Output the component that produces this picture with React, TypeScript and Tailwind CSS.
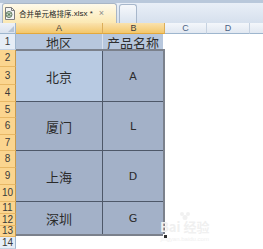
const cjk = "font-['Noto_Sans_CJK_SC','Noto_Sans',sans-serif]";

const rowHeads = [
  { n: '1', h: 'h-[16px]', sel: false },
  { n: '2', h: 'h-[17px]', sel: true },
  { n: '3', h: 'h-[18px]', sel: true },
  { n: '4', h: 'h-[17px]', sel: true },
  { n: '5', h: 'h-[16px]', sel: true },
  { n: '6', h: 'h-[17px]', sel: true },
  { n: '7', h: 'h-[16px]', sel: true },
  { n: '8', h: 'h-[17px]', sel: true },
  { n: '9', h: 'h-[17px]', sel: true },
  { n: '10', h: 'h-[17px]', sel: true },
  { n: '11', h: 'h-[12px]', sel: true },
  { n: '12', h: 'h-[12px]', sel: true },
  { n: '13', h: 'h-[11px]', sel: true },
  { n: '14', h: 'h-[12px]', sel: false },
];

const merged = [
  { a: '北京', b: 'A', h: 'h-[50px]', active: true },
  { a: '厦门', b: 'L', h: 'h-[49px]', active: false },
  { a: '上海', b: 'D', h: 'h-[51px]', active: false },
  { a: '深圳', b: 'G', h: 'h-[33px]', active: false },
];

function ExcelIcon() {
  return (
    <svg width="12" height="13" viewBox="0 0 12 13">
      <path d="M1.5 0.5h6l3 3v9h-9z" fill="#f4f4f4" stroke="#7d7d7d" />
      <path d="M7.5 0.5v3h3" fill="none" stroke="#7d7d7d" />
      <circle cx="5" cy="7.5" r="3" fill="#cfd8cf" stroke="#5d7a5d" />
      <path d="M3.6 6.1l2.8 2.8M6.4 6.1l-2.8 2.8" stroke="#3c6a3c" strokeWidth="1" />
    </svg>
  );
}

function TabBar() {
  return (
    <div className="relative h-[23px] bg-gradient-to-b from-[#e9eff7] to-[#d6e0ed] border-t-[3px] border-[#b9c8db] flex items-end pl-[2px] gap-[2px]">
      <div className="h-[20px] w-[115px] overflow-hidden rounded-t-[3px] border border-b-0 border-[#a9b6c6] bg-gradient-to-b from-[#fffaea] to-[#fbe8b2] flex items-center pl-[1px]">
        <ExcelIcon />
        <span className={`ml-[3px] text-[7.5px] leading-none text-[#1e1e1e] ${cjk}`}>合并单元格排序</span>
        <span className="text-[8px] leading-none text-[#1e1e1e] font-['Liberation_Sans',sans-serif]">.xlsx *</span>
        <span className="ml-[6px] text-[9px] leading-none text-[#8b8b8b] font-['Liberation_Sans',sans-serif]">×</span>
      </div>
      <div className="h-[19px] w-[18px] rounded-t-[3px] border border-b-0 border-[#a7b7cb] bg-gradient-to-b from-[#f6f8fb] to-[#dbe4ef]" />
    </div>
  );
}

function ColHead({ label, w, sel, last }: { label: string; w: string; sel?: boolean; last?: boolean }) {
  return (
    <div
      className={`${w} ${last ? '' : 'border-r'} h-full flex items-center justify-center text-[9px] leading-none font-['Liberation_Sans',sans-serif] ${
        sel
          ? 'bg-gradient-to-b from-[#fae2ad] to-[#f3c76a] border-[#dcae5a] text-[#3b3b3b] border-b border-b-[#e3a83c]'
          : 'bg-gradient-to-b from-[#f4f7fb] to-[#e1e8f1] border-[#c6d2e1] text-[#4c6384] border-b border-b-[#9eb6ce]'
      }`}
    >
      {label}
    </div>
  );
}

export default function App() {
  return (
    <div className="w-[263px] h-[249px] overflow-hidden bg-white relative">
      <TabBar />

      {/* column headers */}
      <div className="flex h-[11px]">
        <div className="w-[16px] h-full bg-gradient-to-b from-[#eef2f8] to-[#dbe3ee] border-r border-b border-[#9eb6ce] relative">
          <div className="absolute right-[1px] bottom-[1px] w-0 h-0 border-l-[6px] border-l-transparent border-b-[6px] border-b-[#b6c4d6]" />
        </div>
        <ColHead label="A" w="w-[87px]" sel />
        <ColHead label="B" w="w-[62px]" sel />
        <ColHead label="C" w="w-[42px]" />
        <ColHead label="D" w="w-[43px]" />
        <ColHead label="" w="flex-1" last />
      </div>

      <div className="flex">
        {/* row headers */}
        <div className="w-[16px] flex flex-col">
          {rowHeads.map((r) => (
            <div
              key={r.n}
              className={`${r.h} flex items-center justify-center text-[10px] leading-none font-['Liberation_Sans',sans-serif] border-r border-b ${
                r.sel
                  ? 'bg-[#fbd58f] border-b-[#e8b866] border-r-[#c99a4c] text-[#3a3a3a]'
                  : 'bg-[#e6edf6] border-b-[#c5d2e2] border-r-[#9eb6ce] text-[#3a3a3a]'
              }`}
            >
              {r.n}
            </div>
          ))}
        </div>

        {/* cells */}
        <div className="flex-1 flex flex-col">
          <div className="flex h-[16px]">
            <div className={`w-[87px] bg-[#b7c7dd] border-r border-[#d9e1ec] flex items-center justify-center text-[13px] leading-none text-[#2f2f2f] ${cjk}`}>
              地区
            </div>
            <div className={`w-[60px] bg-[#b7c7dd] flex items-center justify-center text-[13px] leading-none text-[#2f2f2f] ${cjk}`}>
              产品名称
            </div>
          </div>

          <div className="relative w-[149px] flex flex-col border-t-2 border-r-2 border-b-2 border-[#7b818c] -mt-[1px]">
            {merged.map((m, i) => (
              <div key={m.a} className={`${m.h} flex ${i > 0 ? 'border-t border-[#4e5869]' : ''}`}>
                <div
                  className={`w-[87px] border-r border-[#4e5869] flex items-center justify-center text-[13px] leading-none text-[#2b2b2b] ${cjk} ${
                    m.active ? 'bg-[#b8cae2]' : 'bg-[#a3b1c8]'
                  }`}
                >
                  {m.a}
                </div>
                <div className="flex-1 bg-[#a3b1c8] flex items-center justify-center text-[11px] leading-none text-[#2b2b2b] font-['DejaVu_Sans',sans-serif]">
                  {m.b}
                </div>
              </div>
            ))}
            <div className="absolute -right-[5px] -bottom-[5px] w-[5px] h-[5px] bg-[#2f2f2f] border border-white" />
          </div>
        </div>
      </div>

      {/* watermark */}
      <div className="absolute left-[160px] top-[211px] flex flex-col items-center text-[#f0f0f0] pointer-events-none">
        <svg width="14" height="9" viewBox="0 0 14 9">
          <circle cx="4" cy="3" r="2" fill="#f1f1f1" />
          <circle cx="10" cy="3" r="2" fill="#f1f1f1" />
          <circle cx="7" cy="6.5" r="2.5" fill="#f1f1f1" />
        </svg>
        <div className={`text-[13px] leading-none font-bold ${cjk}`}>Bai 经验</div>
        <div className="text-[6px] leading-none mt-[3px] font-['Liberation_Sans',sans-serif]">jingyan.baidu.com</div>
      </div>
    </div>
  );
}
